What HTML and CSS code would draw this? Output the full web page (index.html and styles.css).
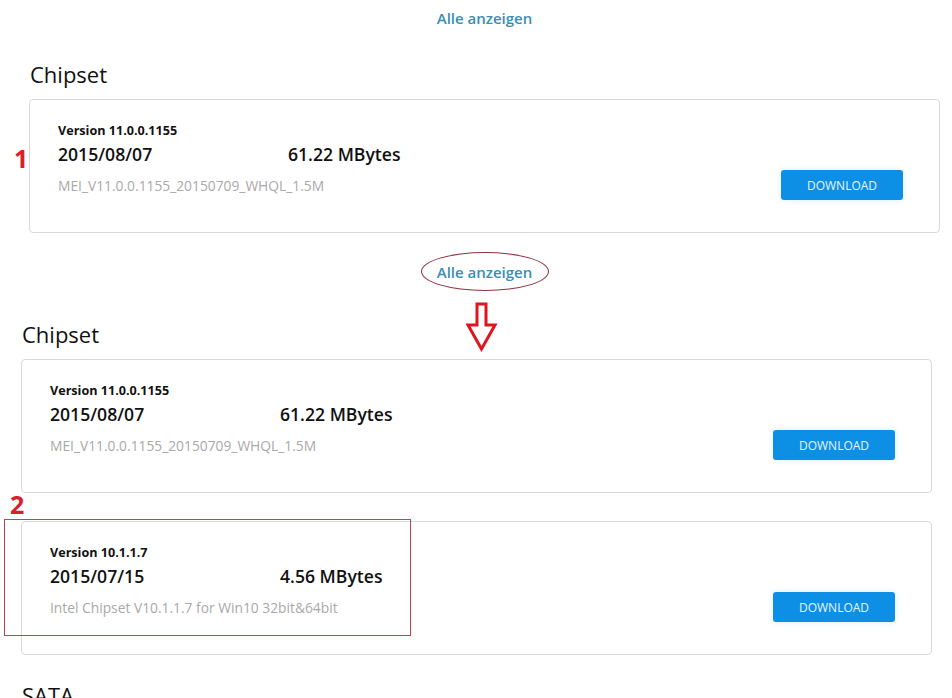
FILE: index.html
```html
<!DOCTYPE html>
<html lang="de">
<head>
    <meta charset="UTF-8">
    <title>Treiber &amp; Tools</title>
    <link rel="stylesheet" href="styles.css">
</head>
<body>
    <!-- Screenshot 1: collapsed list -->
    <section class="shot shot-first">
        <div class="show-all"><a href="#">Alle anzeigen</a></div>

        <h2 class="group-title">Chipset</h2>
        <div class="driver-card">
            <span class="mark mark-one">1</span>
            <div class="driver-info">
                <div class="driver-version">Version 11.0.0.1155</div>
                <div class="driver-meta">
                    <span>2015/08/07</span>
                    <span>61.22 MBytes</span>
                </div>
                <div class="driver-file">MEI_V11.0.0.1155_20150709_WHQL_1.5M</div>
            </div>
            <button class="download-btn">DOWNLOAD</button>
        </div>

        <div class="show-all show-all-circled">
            <a href="#">Alle anzeigen<span class="circle"></span></a>
        </div>
        <svg class="down-arrow" width="32" height="50" viewBox="0 0 32 50">
            <path d="M11 2 H20 V23 H29 L15.5 47 L2 23 H11 Z" fill="none" stroke="#e0141e" stroke-width="3" stroke-linejoin="miter"/>
        </svg>
    </section>

    <!-- Screenshot 2: expanded list -->
    <section class="shot shot-second">
        <h2 class="group-title">Chipset</h2>
        <div class="driver-card">
            <div class="driver-info">
                <div class="driver-version">Version 11.0.0.1155</div>
                <div class="driver-meta">
                    <span>2015/08/07</span>
                    <span>61.22 MBytes</span>
                </div>
                <div class="driver-file">MEI_V11.0.0.1155_20150709_WHQL_1.5M</div>
            </div>
            <button class="download-btn">DOWNLOAD</button>
        </div>

        <div class="driver-card">
            <span class="mark mark-two">2</span>
            <span class="highlight-box"></span>
            <div class="driver-info">
                <div class="driver-version">Version 10.1.1.7</div>
                <div class="driver-meta">
                    <span>2015/07/15</span>
                    <span>4.56 MBytes</span>
                </div>
                <div class="driver-file">Intel Chipset V10.1.1.7 for Win10 32bit&amp;64bit</div>
            </div>
            <button class="download-btn">DOWNLOAD</button>
        </div>

        <h2 class="group-title group-title-sata">SATA</h2>
    </section>
</body>
</html>
```

FILE: styles.css
```css
:root {
    --text-color: #111;
    --muted-color: #a9a9a9;
    --link-color: #3a8db5;
    --border-color: #d9d9d9;
    --button-color: #0d8fe6;
    --mark-color: #d8202c;
}

* {
    margin: 0;
    padding: 0;
    box-sizing: border-box;
}

body {
    font-family: "Open Sans", "Noto Sans", sans-serif;
    color: var(--text-color);
    background-color: #fff;
    width: 952px;
    height: 698px;
    overflow: hidden;
}

.shot {
    position: relative;
    width: 952px;
}

.shot-first {
    padding: 8px 12px 0 29px;
}

.shot-second {
    padding: 0 21px 0 21px;
}

.show-all {
    text-align: center;
    line-height: 20px;
    font-size: 15px;
    font-weight: 600;
}

.show-all a {
    position: relative;
    color: var(--link-color);
    text-decoration: none;
}

.show-all-circled {
    margin-top: 29px;
}

.circle {
    position: absolute;
    left: -16px;
    top: -10px;
    width: 128px;
    height: 39px;
    border: 1px solid #8e3444;
    border-radius: 50%;
}

.down-arrow {
    position: absolute;
    left: 466px;
    top: 302px;
}

.group-title {
    font-size: 22px;
    font-weight: 400;
    line-height: 30px;
    margin: 31px 0 10px 1px;
    color: #111;
}

.shot-second .group-title {
    margin-top: 37px;
}

.shot-second .group-title-sata {
    margin-top: 25px;
}

.driver-card {
    position: relative;
    display: flex;
    justify-content: space-between;
    width: 911px;
    height: 134px;
    padding: 22px 36px 0 28px;
    border: 1px solid var(--border-color);
    border-radius: 4px;
    background: #fff;
}

.driver-card + .driver-card {
    margin-top: 28px;
}

.driver-version {
    font-size: 12.6px;
    font-weight: 700;
    line-height: 17px;
}

.driver-meta {
    display: grid;
    grid-template-columns: 230px auto;
    margin-top: 3px;
    font-size: 17.6px;
    font-weight: 600;
    line-height: 24px;
}

.driver-file {
    margin-top: 11px;
    font-size: 13.8px;
    line-height: 18px;
    color: var(--muted-color);
}

.download-btn {
    width: 122px;
    height: 30px;
    margin-top: 48px;
    border: none;
    border-radius: 3px;
    background-color: var(--button-color);
    color: #e6f6ff;
    font-family: inherit;
    font-size: 12px;
    box-shadow: 0 0 6px rgba(13, 143, 230, 0.15);
    cursor: pointer;
}

/* annotations on top of the screenshots */
.mark {
    position: absolute;
    color: var(--mark-color);
    font-size: 25px;
    font-weight: 700;
    line-height: 24px;
}

.mark-one {
    left: -16px;
    top: 46px;
}

.mark-two {
    left: -12px;
    top: -30px;
}

.highlight-box {
    position: absolute;
    left: -18px;
    top: -3px;
    width: 407px;
    height: 117px;
    border: 1px solid #bd4454;
}
```
